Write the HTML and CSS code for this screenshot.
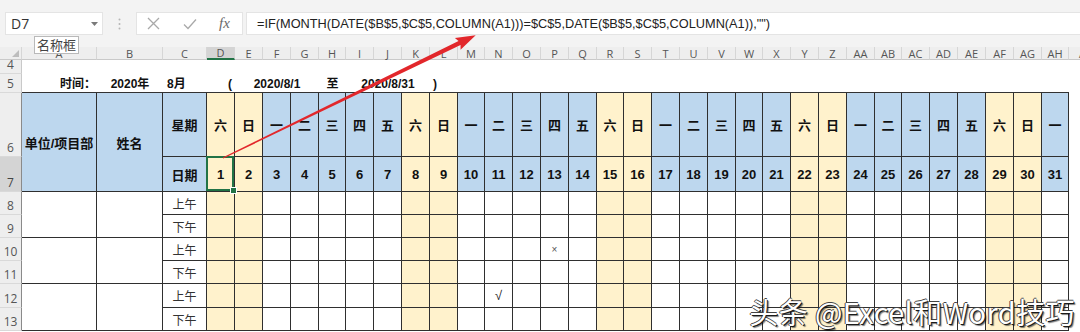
FILE: index.html
```html
<!DOCTYPE html>
<html lang="zh-CN">
<head>
<meta charset="utf-8">
<title>考勤表</title>
<link rel="stylesheet" href="styles.css">
</head>
<body>
<div class="app">
  <div class="toolbar">
    <div class="namebox">
      <span class="nb-text">D7</span>
      <svg class="nb-drop" width="7" height="4" viewBox="0 0 7 4"><polygon points="0,0 7,0 3.5,4" fill="#7a7a7a"/></svg>
    </div>
    <div class="grip">
      <svg width="3" height="12" viewBox="0 0 3 12"><circle cx="1.5" cy="1.5" r="1" fill="#b5b5b5"/><circle cx="1.5" cy="6" r="1" fill="#b5b5b5"/><circle cx="1.5" cy="10.5" r="1" fill="#b5b5b5"/></svg>
    </div>
    <div class="fbtns">
      <svg class="fb-x" width="13" height="13" viewBox="0 0 13 13"><path d="M1 1 L12 12 M12 1 L1 12" stroke="#a9a9a9" stroke-width="1.3" fill="none"/></svg>
      <svg class="fb-ok" width="14" height="12" viewBox="0 0 14 12"><path d="M1 6.5 L5 10.5 L13 1.5" stroke="#a9a9a9" stroke-width="1.3" fill="none"/></svg>
      <span class="fb-fx">fx</span>
    </div>
    <div class="fbox">=IF(MONTH(DATE($B$5,$C$5,COLUMN(A1)))=$C$5,DATE($B$5,$C$5,COLUMN(A1)),"")</div>
  </div>

  <div class="sheet">
    <!-- column headers -->
    <div class="ch corner"><span class="tri"></span></div>
    <div class="ch">A</div><div class="ch">B</div><div class="ch">C</div><div class="ch act">D</div><div class="ch">E</div><div class="ch">F</div><div class="ch">G</div><div class="ch">H</div><div class="ch">I</div><div class="ch">J</div><div class="ch">K</div><div class="ch">L</div><div class="ch">M</div><div class="ch">N</div><div class="ch">O</div><div class="ch">P</div><div class="ch">Q</div><div class="ch">R</div><div class="ch">S</div><div class="ch">T</div><div class="ch">U</div><div class="ch">V</div><div class="ch">W</div><div class="ch">X</div><div class="ch">Y</div><div class="ch">Z</div><div class="ch">AA</div><div class="ch">AB</div><div class="ch">AC</div><div class="ch">AD</div><div class="ch">AE</div><div class="ch">AF</div><div class="ch">AG</div><div class="ch">AH</div><div class="ch">AI</div>

    <!-- row 4 -->
    <div class="rh">4</div>
    <div class="blank"></div>

    <!-- row 5 -->
    <div class="rh">5</div>
    <div class="t5 r5-a">时间：</div>
    <div class="t5">2020年</div>
    <div class="t5 r5-l">8月</div>
    <div class="t5 r5-r">(</div>
    <div class="t5 span3">2020/8/1</div>
    <div class="t5">至</div>
    <div class="t5 span3">2020/8/31</div>
    <div class="t5 r5-l2">)</div>
    <div class="t5 span22"></div>
    <div class="ai"></div>

    <!-- row 6 -->
    <div class="rh tb">6</div>
    <div class="g hb hd m2">单位/项目部</div>
    <div class="g hb hd m2">姓名</div>
    <div class="g hb hd">星期</div>
    <div class="g we hd">六</div><div class="g we hd">日</div><div class="g hb hd">一</div><div class="g hb hd">二</div><div class="g hb hd">三</div><div class="g hb hd">四</div><div class="g hb hd">五</div>
    <div class="g we hd">六</div><div class="g we hd">日</div><div class="g hb hd">一</div><div class="g hb hd">二</div><div class="g hb hd">三</div><div class="g hb hd">四</div><div class="g hb hd">五</div>
    <div class="g we hd">六</div><div class="g we hd">日</div><div class="g hb hd">一</div><div class="g hb hd">二</div><div class="g hb hd">三</div><div class="g hb hd">四</div><div class="g hb hd">五</div>
    <div class="g we hd">六</div><div class="g we hd">日</div><div class="g hb hd">一</div><div class="g hb hd">二</div><div class="g hb hd">三</div><div class="g hb hd">四</div><div class="g hb hd">五</div>
    <div class="g we hd">六</div><div class="g we hd">日</div><div class="g hb hd">一</div>
    <div class="ai"></div>

    <!-- row 7 -->
    <div class="rh tb act">7</div>
    <div class="g hb hd">日期</div>
    <div class="g we hd sel">1</div><div class="g we hd">2</div><div class="g hb hd">3</div><div class="g hb hd">4</div><div class="g hb hd">5</div><div class="g hb hd">6</div><div class="g hb hd">7</div>
    <div class="g we hd">8</div><div class="g we hd">9</div><div class="g hb hd">10</div><div class="g hb hd">11</div><div class="g hb hd">12</div><div class="g hb hd">13</div><div class="g hb hd">14</div>
    <div class="g we hd">15</div><div class="g we hd">16</div><div class="g hb hd">17</div><div class="g hb hd">18</div><div class="g hb hd">19</div><div class="g hb hd">20</div><div class="g hb hd">21</div>
    <div class="g we hd">22</div><div class="g we hd">23</div><div class="g hb hd">24</div><div class="g hb hd">25</div><div class="g hb hd">26</div><div class="g hb hd">27</div><div class="g hb hd">28</div>
    <div class="g we hd">29</div><div class="g we hd">30</div><div class="g hb hd">31</div>
    <div class="ai"></div>

    <!-- row 8 -->
    <div class="rh tb">8</div>
    <div class="g m2"></div>
    <div class="g m2"></div>
    <div class="g ap">上午</div>
    <div class="g we"></div><div class="g we"></div><div class="g"></div><div class="g"></div><div class="g"></div><div class="g"></div><div class="g"></div>
    <div class="g we"></div><div class="g we"></div><div class="g"></div><div class="g"></div><div class="g"></div><div class="g"></div><div class="g"></div>
    <div class="g we"></div><div class="g we"></div><div class="g"></div><div class="g"></div><div class="g"></div><div class="g"></div><div class="g"></div>
    <div class="g we"></div><div class="g we"></div><div class="g"></div><div class="g"></div><div class="g"></div><div class="g"></div><div class="g"></div>
    <div class="g we"></div><div class="g we"></div><div class="g"></div>
    <div class="ai"></div>

    <!-- row 9 -->
    <div class="rh tb">9</div>
    <div class="g ap">下午</div>
    <div class="g we"></div><div class="g we"></div><div class="g"></div><div class="g"></div><div class="g"></div><div class="g"></div><div class="g"></div>
    <div class="g we"></div><div class="g we"></div><div class="g"></div><div class="g"></div><div class="g"></div><div class="g"></div><div class="g"></div>
    <div class="g we"></div><div class="g we"></div><div class="g"></div><div class="g"></div><div class="g"></div><div class="g"></div><div class="g"></div>
    <div class="g we"></div><div class="g we"></div><div class="g"></div><div class="g"></div><div class="g"></div><div class="g"></div><div class="g"></div>
    <div class="g we"></div><div class="g we"></div><div class="g"></div>
    <div class="ai"></div>

    <!-- row 10 -->
    <div class="rh tb">10</div>
    <div class="g m2"></div>
    <div class="g m2"></div>
    <div class="g ap">上午</div>
    <div class="g we"></div><div class="g we"></div><div class="g"></div><div class="g"></div><div class="g"></div><div class="g"></div><div class="g"></div>
    <div class="g we"></div><div class="g we"></div><div class="g"></div><div class="g"></div><div class="g"></div><div class="g mk-x">×</div><div class="g"></div>
    <div class="g we"></div><div class="g we"></div><div class="g"></div><div class="g"></div><div class="g"></div><div class="g"></div><div class="g"></div>
    <div class="g we"></div><div class="g we"></div><div class="g"></div><div class="g"></div><div class="g"></div><div class="g"></div><div class="g"></div>
    <div class="g we"></div><div class="g we"></div><div class="g"></div>
    <div class="ai"></div>

    <!-- row 11 -->
    <div class="rh tb">11</div>
    <div class="g ap">下午</div>
    <div class="g we"></div><div class="g we"></div><div class="g"></div><div class="g"></div><div class="g"></div><div class="g"></div><div class="g"></div>
    <div class="g we"></div><div class="g we"></div><div class="g"></div><div class="g"></div><div class="g"></div><div class="g"></div><div class="g"></div>
    <div class="g we"></div><div class="g we"></div><div class="g"></div><div class="g"></div><div class="g"></div><div class="g"></div><div class="g"></div>
    <div class="g we"></div><div class="g we"></div><div class="g"></div><div class="g"></div><div class="g"></div><div class="g"></div><div class="g"></div>
    <div class="g we"></div><div class="g we"></div><div class="g"></div>
    <div class="ai"></div>

    <!-- row 12 -->
    <div class="rh tb">12</div>
    <div class="g m2"></div>
    <div class="g m2"></div>
    <div class="g ap">上午</div>
    <div class="g we"></div><div class="g we"></div><div class="g"></div><div class="g"></div><div class="g"></div><div class="g"></div><div class="g"></div>
    <div class="g we"></div><div class="g we"></div><div class="g"></div><div class="g mk-v">√</div><div class="g"></div><div class="g"></div><div class="g"></div>
    <div class="g we"></div><div class="g we"></div><div class="g"></div><div class="g"></div><div class="g"></div><div class="g"></div><div class="g"></div>
    <div class="g we"></div><div class="g we"></div><div class="g"></div><div class="g"></div><div class="g"></div><div class="g"></div><div class="g"></div>
    <div class="g we"></div><div class="g we"></div><div class="g"></div>
    <div class="ai"></div>

    <!-- row 13 -->
    <div class="rh tb">13</div>
    <div class="g ap">下午</div>
    <div class="g we"></div><div class="g we"></div><div class="g"></div><div class="g"></div><div class="g"></div><div class="g"></div><div class="g"></div>
    <div class="g we"></div><div class="g we"></div><div class="g"></div><div class="g"></div><div class="g"></div><div class="g"></div><div class="g"></div>
    <div class="g we"></div><div class="g we"></div><div class="g"></div><div class="g"></div><div class="g"></div><div class="g"></div><div class="g"></div>
    <div class="g we"></div><div class="g we"></div><div class="g"></div><div class="g"></div><div class="g"></div><div class="g"></div><div class="g"></div>
    <div class="g we"></div><div class="g we"></div><div class="g"></div>
    <div class="ai"></div>
  </div>

  <div class="tooltip">名称框</div>

  <svg class="arrow" width="1080" height="332" viewBox="0 0 1080 332">
    <g transform="translate(223 158) rotate(-25.93)">
      <polygon points="0,-0.6 263,-2.3 261,-6.5 281,0 261,6.5 263,2.3 0,0.6" fill="#e2272b"/>
    </g>
  </svg>

  <div class="watermark">头条 @Excel和Word技巧</div>
</div>
</body>
</html>
```

FILE: styles.css
```css
* { box-sizing: border-box; }

body {
  margin: 0;
  font-family: "Liberation Sans", "Noto Sans CJK SC", sans-serif;
  background: #ffffff;
}

.app {
  position: relative;
  width: 1080px;
  height: 332px;
  overflow: hidden;
  background: #ffffff;
}

/* ---------- formula bar ---------- */
.toolbar {
  height: 47px;
  background: #f3f3f3;
  display: flex;
  align-items: flex-start;
  padding-top: 12px;
}

.namebox {
  margin-left: 5px;
  width: 98px;
  height: 23px;
  background: #ffffff;
  border: 1px solid #e4e4e4;
  display: flex;
  align-items: center;
  justify-content: space-between;
  padding: 0 4px 0 5px;
}

.nb-text {
  font-family: "Open Sans", "Liberation Sans", sans-serif;
  font-size: 14px;
  color: #333333;
}

.grip {
  width: 33px;
  height: 23px;
  display: flex;
  align-items: center;
  justify-content: center;
}

.fbtns {
  width: 107px;
  height: 23px;
  background: #ffffff;
  border: 1px solid #e4e4e4;
  display: flex;
  align-items: center;
  padding-left: 10px;
}

.fb-x { margin-right: 23px; }
.fb-ok { margin-right: 22px; }

.fb-fx {
  font-family: "Liberation Serif", serif;
  font-style: italic;
  font-size: 15px;
  color: #6a6a6a;
}

.fbox {
  flex: 1;
  margin-left: 3px;
  height: 23px;
  background: #ffffff;
  border: 1px solid #e4e4e4;
  border-right: none;
  display: flex;
  align-items: center;
  padding-left: 10px;
  font-family: "Liberation Sans", sans-serif;
  font-size: 12.75px;
  color: #222222;
  white-space: nowrap;
}

/* ---------- sheet grid ---------- */
.sheet {
  width: 1100px;
  display: grid;
  grid-template-columns:
    22px 75px 66px 44px
    repeat(5, 28px 28px 28px 28px 27px)
    28px 28px 28px 28px 28px 27px
    1fr;
  grid-template-rows: 13px 14px 19px 64px 35px 23px 23px 23px 23px 24px 23px;
}

.sheet > div {
  display: flex;
  align-items: center;
  justify-content: center;
  white-space: nowrap;
  min-width: 0;
}

.ch {
  background: #eeeeee;
  border-right: 1px solid #d6d6d6;
  border-bottom: 1px solid #c9c9c9;
  font-family: "Open Sans", "Liberation Sans", sans-serif;
  font-size: 11px;
  color: #555555;
  line-height: 1;
}

.ch.act {
  background: #d4d4d4;
  border-bottom: 2px solid #217346;
}

.sheet > .corner {
  justify-content: flex-end;
  align-items: flex-end;
  padding: 0 2px 2px 0;
}

.tri {
  width: 7px;
  height: 7px;
  background: #bdbdbd;
  clip-path: polygon(100% 0, 100% 100%, 0 100%);
}

.sheet > .rh {
  background: #eeeeee;
  border-right: 1px solid #c9c9c9;
  border-bottom: 1px solid #d9d9d9;
  font-family: "Open Sans", "Liberation Sans", sans-serif;
  font-size: 12px;
  color: #555555;
  align-items: flex-end;
  line-height: 1;
  padding-bottom: 2px;
}

.sheet > .rh.tb { border-right-color: #8a8a8a; }
.sheet > .rh.act { background: #d4d4d4; color: #444444; }

.blank { grid-column: 2 / -1; }

/* row 5 */
.sheet > .t5 {
  font-size: 12px;
  font-weight: bold;
  color: #111111;
  border-bottom: 1px solid #333333;
  align-items: flex-end;
  padding-bottom: 2px;
  line-height: 1;
}

.sheet > .r5-a { justify-content: flex-end; padding-right: 1px; }
.sheet > .r5-l { justify-content: flex-start; padding-left: 4px; }
.sheet > .r5-r { justify-content: flex-end; padding-right: 3px; }
.sheet > .r5-l2 { justify-content: flex-start; padding-left: 3px; }
.span3 { grid-column: span 3; }
.span22 { grid-column: span 22; }

/* grid cells */
.g {
  border-right: 1px solid #2f2f2f;
  border-bottom: 1px solid #2f2f2f;
  background: #ffffff;
  position: relative;
}

.g.hb { background: #bdd7ee; }
.g.we { background: #fff2cc; }

.hd {
  font-size: 13px;
  font-weight: bold;
  color: #111111;
}

.m2 { grid-row: span 2; }

.ap {
  font-size: 12px;
  color: #333333;
}

.mk-x { font-size: 10px; color: #555555; }
.mk-v { font-size: 13px; color: #222222; }

.sel::after {
  content: "";
  position: absolute;
  left: -1px;
  top: -1px;
  right: 0;
  bottom: 0;
  border: 2px solid #217346;
}

.sel::before {
  content: "";
  position: absolute;
  right: -3px;
  bottom: -3px;
  width: 5px;
  height: 5px;
  background: #217346;
  border: 1px solid #ffffff;
  z-index: 2;
}

.ai { background: #ffffff; }

/* ---------- overlays ---------- */
.tooltip {
  position: absolute;
  left: 34px;
  top: 36px;
  height: 18px;
  padding: 0 2px;
  background: #ffffff;
  border: 1px solid #b9b9b9;
  font-family: "Noto Sans CJK SC", sans-serif;
  font-size: 13px;
  line-height: 16px;
  color: #444444;
}

.arrow {
  position: absolute;
  left: 0;
  top: 0;
  pointer-events: none;
}

.watermark {
  position: absolute;
  right: 5px;
  bottom: 6px;
  font-family: "Noto Sans CJK SC", sans-serif;
  font-size: 29px;
  line-height: 1;
  color: #ffffff;
  letter-spacing: 0.4px;
  text-shadow: 1px 1px 0 #1a1a1a, -1px 0 0 #444444, 0 -1px 0 #444444, 2px 2px 1px rgba(0,0,0,0.5);
}
```
